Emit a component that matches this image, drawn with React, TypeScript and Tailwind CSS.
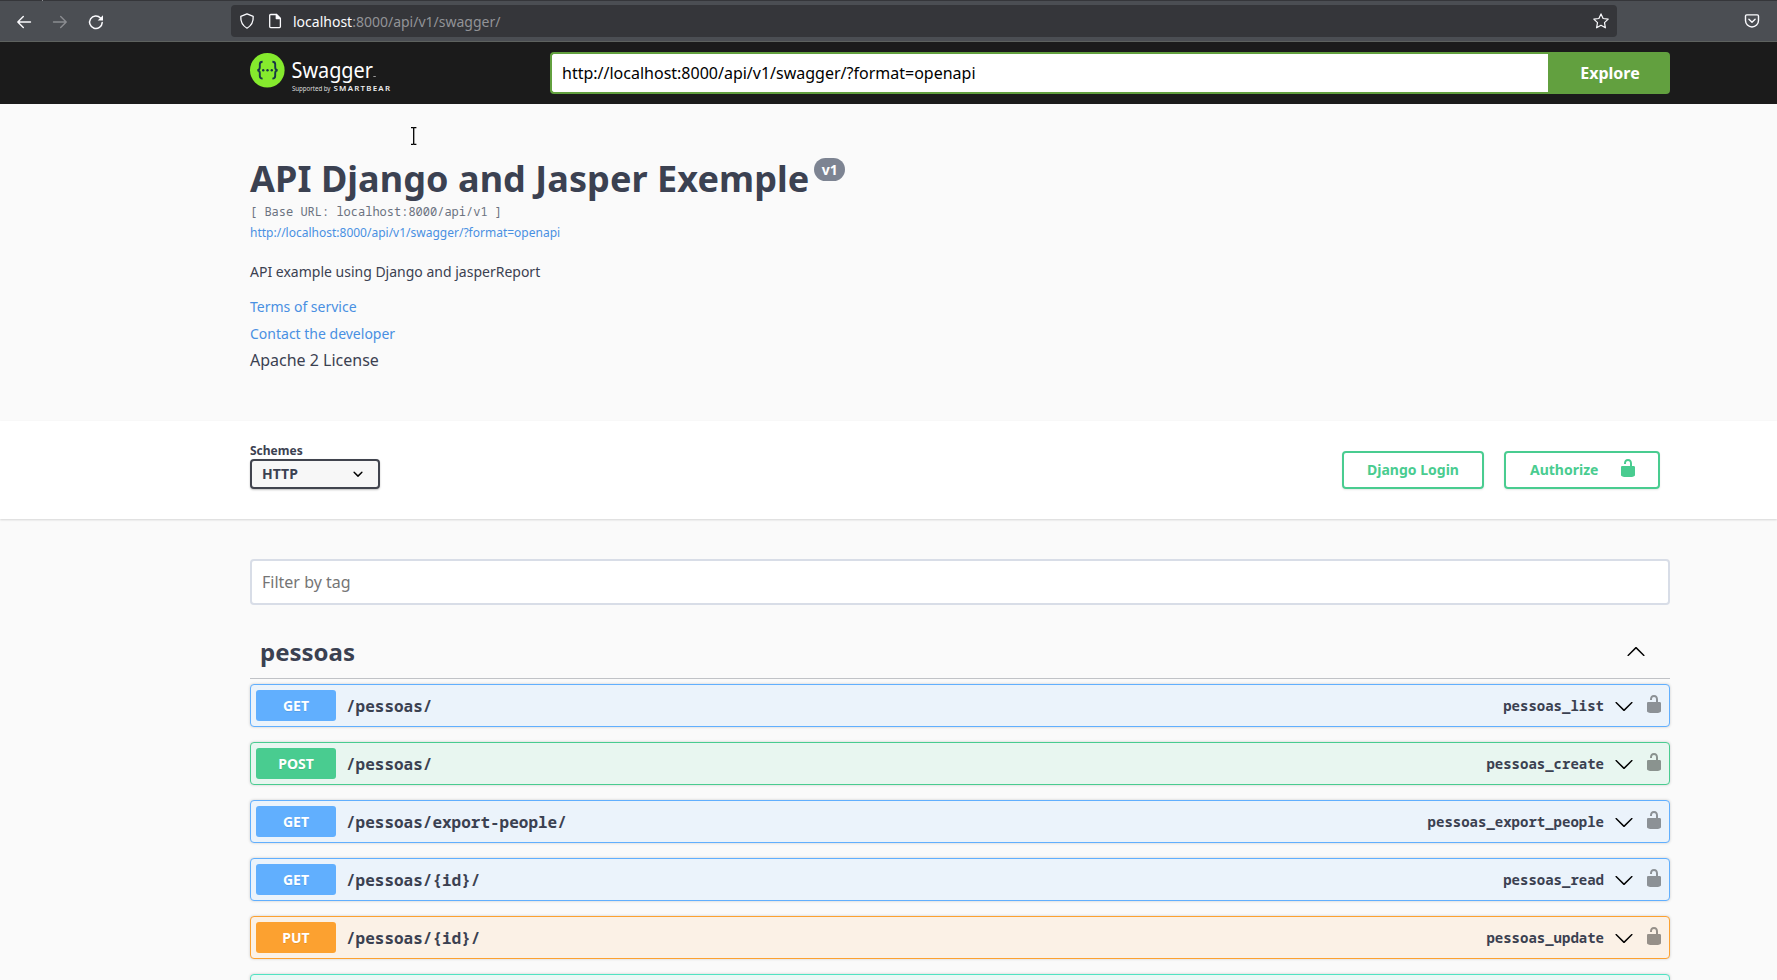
import React from "react";

const UNLOCK =
  "M15.8 8H14V5.6C14 2.703 12.665 1 10 1 7.334 1 6 2.703 6 5.6V6h2v-.801C8 3.754 8.797 3 10 3c1.203 0 2 .754 2 2.199V8H4c-.553 0-1 .646-1 1.199V17c0 .549.428 1.139.951 1.307l1.197.387C5.672 18.861 6.55 19 7.1 19h5.8c.549 0 1.428-.139 1.951-.307l1.196-.387c.524-.167.953-.757.953-1.306V9.199C17 8.646 16.352 8 15.8 8z";
const ARROW_UP =
  "M 17.418 14.908 C 17.69 15.176 18.127 15.176 18.397 14.908 C 18.667 14.64 18.668 14.207 18.397 13.939 L 10.489 6.109 C 10.219 5.841 9.782 5.841 9.51 6.109 L 1.602 13.939 C 1.332 14.207 1.332 14.64 1.602 14.908 C 1.873 15.176 2.311 15.176 2.581 14.908 L 10 7.767 L 17.418 14.908 Z";
const ARROW_DOWN =
  "M17.418 6.109c.272-.268.709-.268.979 0s.271.701 0 .969l-7.908 7.83c-.27.268-.707.268-.979 0l-7.908-7.83c-.27-.268-.27-.701 0-.969.271-.268.709-.268.979 0L10 13.25l7.418-7.141z";
const SELECT_ARROW =
  "M13.418 7.859a.695.695 0 01.978 0 .68.68 0 010 .969l-3.908 3.83a.697.697 0 01-.979 0l-3.908-3.83a.68.68 0 010-.969.695.695 0 01.978 0L10 11l3.418-3.141z";

function Glyph({ d, className = "" }: { d: string; className?: string }) {
  return (
    <svg viewBox="0 0 20 20" className={`size-5 shrink-0 fill-current ${className}`}>
      <path d={d} />
    </svg>
  );
}

function BrowserBar() {
  return (
    <div className="relative flex h-[42px] items-center border-t border-b border-t-[#35363a] border-b-[#5e625f] bg-[#4b4e53]">
      <span className="absolute -top-px left-[42px] h-px w-px bg-[#8b8d91]" />
      <div className="flex w-[231px] items-center gap-5 pt-px pl-4 text-[#fbfbfe]">
        <svg viewBox="0 0 16 16" className="size-4 fill-none stroke-current" strokeWidth="1.4" strokeLinecap="round" strokeLinejoin="round">
          <path d="M14.500 8H2M7.300 2.600L1.800 8l5.500 5.400" />
        </svg>
        <svg viewBox="0 0 16 16" className="size-4 fill-none stroke-[#8b8d91]" strokeWidth="1.4" strokeLinecap="round" strokeLinejoin="round">
          <path d="M1.500 8H14M8.700 2.600L14.200 8l-5.500 5.400" />
        </svg>
        <svg viewBox="0 0 16 16" className="size-4 fill-none stroke-current" strokeWidth="1.5" strokeLinecap="round">
          <path d="M14.200 8.600A6.300 6.300 0 1 1 12.500 3.900" />
          <path d="M15 1.200v5.300H9.700z" className="fill-current" stroke="none" />
        </svg>
      </div>
      <div className="flex h-8 w-[1386px] items-center rounded-[4px] bg-[#35363a] pr-2 pl-2 text-[#fbfbfe]">
        <svg viewBox="0 0 16 16" className="size-4 fill-none stroke-current" strokeWidth="1.3" strokeLinejoin="round">
          <path d="M8 .9l6.200 2.500c.3 4.900-1.200 9-6.200 11.800C3 12.400 1.500 8.300 1.800 3.400z" />
        </svg>
        <svg viewBox="0 0 16 16" className="ml-3 size-4 fill-none stroke-current" strokeWidth="1.3" strokeLinejoin="round">
          <path d="M3.700 1.500h5.800l3.900 3.900v8.200a1 1 0 0 1-1 1H3.700a1 1 0 0 1-1-1V2.500a1 1 0 0 1 1-1z" />
          <path d="M9.300 1.500v4h4z" className="fill-current" />
        </svg>
        <span className="ml-2.5 pt-px text-sm leading-5 text-[#929397]">
          <span className="text-[#fbfbfe]">localhost</span>:8000/api/v1/swagger/
        </span>
        <svg viewBox="0 0 16 16" className="ml-auto size-4 fill-none stroke-current" strokeWidth="1.2" strokeLinejoin="round">
          <path d="M8 .9l2.100 4.600 5.100.6-3.700 3.500.9 5.200L8 12.300l-4.400 2.500.9-5.200L.8 6.100l5.100-.6z" />
        </svg>
      </div>
      <svg viewBox="0 0 16 16" className="mr-[17px] ml-auto size-4 fill-none stroke-[#fbfbfe]" strokeWidth="1.4" strokeLinecap="round" strokeLinejoin="round">
        <path d="M2.700 1.900h10.600a1.200 1.200 0 0 1 1.200 1.200v4.400a6.500 6.500 0 0 1-13 0V3.100a1.200 1.200 0 0 1 1.200-1.200z" />
        <path d="M4.900 6.200L8 9.200l3.100-3" />
      </svg>
    </div>
  );
}

function Logo() {
  return (
    <svg viewBox="0 0 142 42" className="h-[42px] w-[142px]">
      <circle cx="17.300" cy="18.200" r="17.300" fill="#85ea2d" />
      <g fill="none" stroke="#173647" strokeWidth="1.900">
        <path d="M12.600 9.800c-2.300 0-2.800.8-2.800 2.500v3c0 1.800-.6 2.700-2.400 2.900 1.800.2 2.400 1.100 2.400 2.900v3c0 1.700.5 2.500 2.800 2.500" />
        <path d="M22.400 9.800c2.300 0 2.800.8 2.800 2.500v3c0 1.800.6 2.700 2.400 2.900-1.800.2-2.400 1.100-2.400 2.900v3c0 1.700-.5 2.500-2.800 2.500" />
      </g>
      <g fill="#173647">
        <circle cx="13.200" cy="18.200" r="1.200" />
        <circle cx="17.500" cy="18.200" r="1.200" />
        <circle cx="21.800" cy="18.200" r="1.200" />
      </g>
      <g fill="#fff" fontFamily="Noto Sans">
        <text x="41.500" y="25.700" fontSize="22.500" textLength="81.500" lengthAdjust="spacingAndGlyphs">Swagger</text>
        <text x="42" y="39.300" fontSize="6.200" textLength="38.500" fill="#ddd">Supported by</text>
        <text x="83.500" y="39" fontSize="7.900" fontWeight="600" textLength="56.500" fill="#eee">SMARTBEAR</text>
      </g>
      <rect x="123.300" y="24" width="2.500" height="1" fill="#999" />
    </svg>
  );
}

function Topbar() {
  return (
    <header className="flex h-[62px] items-center bg-[#1b1b1b] px-[250px] pr-[107px]">
      <Logo />
      <div className="ml-auto flex h-[42px] w-[1120px] rounded-[4px]">
        <div className="flex flex-1 items-center rounded-l-[4px] border-2 border-r-0 border-[#62a03f] bg-white pl-2.5 text-base text-black">
          http://localhost:8000/api/v1/swagger/?format=openapi
        </div>
        <button className="w-[122px] rounded-r-[4px] bg-[#62a03f] pl-0.5 text-base font-bold text-white">Explore</button>
      </div>
    </header>
  );
}

function Info() {
  return (
    <section className="relative h-[317px] px-[250px] pt-[50px]">
      <svg viewBox="0 0 8 20" className="absolute top-[22px] left-[410px] h-5 w-2 fill-none stroke-black" strokeWidth="1.300">
        <path d="M1 1.600h2q.7 0 .7.800v15.200q0 .8-.7.800H1M6.400 1.600h-2q-.7 0-.7.800v15.200q0 .8.700.8h2" />
      </svg>
      <h1 className="flex h-[49px] items-start text-4xl leading-[49px] font-bold tracking-[0.065px]">
        API Django and Jasper Exemple
        <span className="mt-1 ml-[5px] h-[23px] w-[31px] rounded-full bg-[#7d8492] text-center text-sm leading-[23px] text-white">v1</span>
      </h1>
      <pre className="mt-[1px] font-[Noto_Sans_Mono,DejaVu_Sans_Mono,monospace] text-xs leading-4 text-[#6b7280]">[ Base URL: localhost:8000/api/v1 ]</pre>
      <a className="mt-[5px] block text-xs leading-4 text-[#4990e2]">http://localhost:8000/api/v1/swagger/?format=openapi</a>
      <p className="mt-[21px] text-sm leading-5">API example using Django and jasperReport</p>
      <a className="mt-[15px] block text-sm leading-5 text-[#4990e2]">Terms of service</a>
      <a className="mt-[7px] block text-sm leading-5 text-[#4990e2]">Contact the developer</a>
      <p className="mt-1 text-base leading-6">Apache 2 License</p>
    </section>
  );
}

function SchemeBar() {
  return (
    <section className="flex h-[98px] items-start justify-between bg-white pt-[30px] pr-[117px] pl-[250px] shadow-[0_1px_2px_0_rgba(0,0,0,0.15)]">
      <div className="-mt-2">
        <div className="h-4 text-xs leading-4 font-bold">Schemes</div>
        <div className="flex h-[30px] w-[130px] items-center justify-between rounded-[4px] border-2 border-[#41444e] bg-[#f7f7f7] pr-2.5 pl-2.5 text-sm font-bold shadow-[0_1px_2px_0_rgba(0,0,0,0.25)]">
          HTTP
          <Glyph d={SELECT_ARROW} className="text-black" />
        </div>
      </div>
      <div className="flex gap-5 text-sm font-bold text-[#49cc90]">
        <button className="h-[38px] w-[142px] rounded-[4px] border-2 border-[#49cc90] shadow-[0_1px_2px_rgba(0,0,0,0.1)]">Django Login</button>
        <button className="flex h-[38px] w-[156px] items-center justify-between rounded-[4px] border-2 border-[#49cc90] pr-5 pl-6 shadow-[0_1px_2px_rgba(0,0,0,0.1)]">
          Authorize
          <Glyph d={UNLOCK} className="mb-1" />
        </button>
      </div>
    </section>
  );
}

const OPERATIONS = [
  { method: "GET", path: "/pessoas/", id: "pessoas_list", row: "border-[#61affe] bg-[#ebf3fb]", badge: "bg-[#61affe]" },
  { method: "POST", path: "/pessoas/", id: "pessoas_create", row: "border-[#49cc90] bg-[#e8f6f0]", badge: "bg-[#49cc90]" },
  { method: "GET", path: "/pessoas/export-people/", id: "pessoas_export_people", row: "border-[#61affe] bg-[#ebf3fb]", badge: "bg-[#61affe]" },
  { method: "GET", path: "/pessoas/{id}/", id: "pessoas_read", row: "border-[#61affe] bg-[#ebf3fb]", badge: "bg-[#61affe]" },
  { method: "PUT", path: "/pessoas/{id}/", id: "pessoas_update", row: "border-[#fca130] bg-[#fbf1e6]", badge: "bg-[#fca130]" },
];

function Operations() {
  return (
    <main className="px-[250px] pt-10 pr-[107px]">
      <div className="flex h-[46px] items-center rounded-[4px] border-2 border-[#d8dde7] bg-white pl-2.5 text-base text-[#757575]">Filter by tag</div>
      <div className="mt-[22px] flex h-[52px] items-center justify-between border-b border-[#3b4151]/30 pr-6 pl-2.5">
        <h2 className="mb-0.5 text-2xl leading-8 font-bold">pessoas</h2>
        <Glyph d={ARROW_UP} className="mb-[3px] text-black" />
      </div>
      <div className="mt-[5px] flex flex-col gap-[15px]">
        {OPERATIONS.map((op) => (
          <div key={op.id} className={`flex h-[43px] items-center rounded-[4px] border pr-[5px] pl-[5px] shadow-[0_0_3px_rgba(0,0,0,0.19)] ${op.row}`}>
            <span className={`h-[31px] w-20 rounded-[3px] text-center text-sm leading-[31px] font-bold text-white [text-shadow:0_1px_0_rgba(0,0,0,0.1)] ${op.badge}`}>{op.method}</span>
            <span className="pl-2.5 font-[Noto_Sans_Mono,DejaVu_Sans_Mono,monospace] text-base font-bold">{op.path}</span>
            <span className="ml-auto font-[Noto_Sans_Mono,DejaVu_Sans_Mono,monospace] text-sm font-bold">{op.id}</span>
            <Glyph d={ARROW_DOWN} className="ml-2.5 text-black" />
            <Glyph d={UNLOCK} className="mb-[3px] ml-2.5 text-black opacity-40" />
          </div>
        ))}
        <div className="h-[43px] rounded-[4px] border border-[#50e3c2] bg-[#e9f8f5] shadow-[0_0_3px_rgba(0,0,0,0.19)]" />
      </div>
    </main>
  );
}

export default function App() {
  return (
    <div className="h-[980px] overflow-hidden bg-[#fafafa] font-['Noto_Sans',sans-serif] text-[#3b4151]">
      <BrowserBar />
      <Topbar />
      <Info />
      <SchemeBar />
      <Operations />
    </div>
  );
}
